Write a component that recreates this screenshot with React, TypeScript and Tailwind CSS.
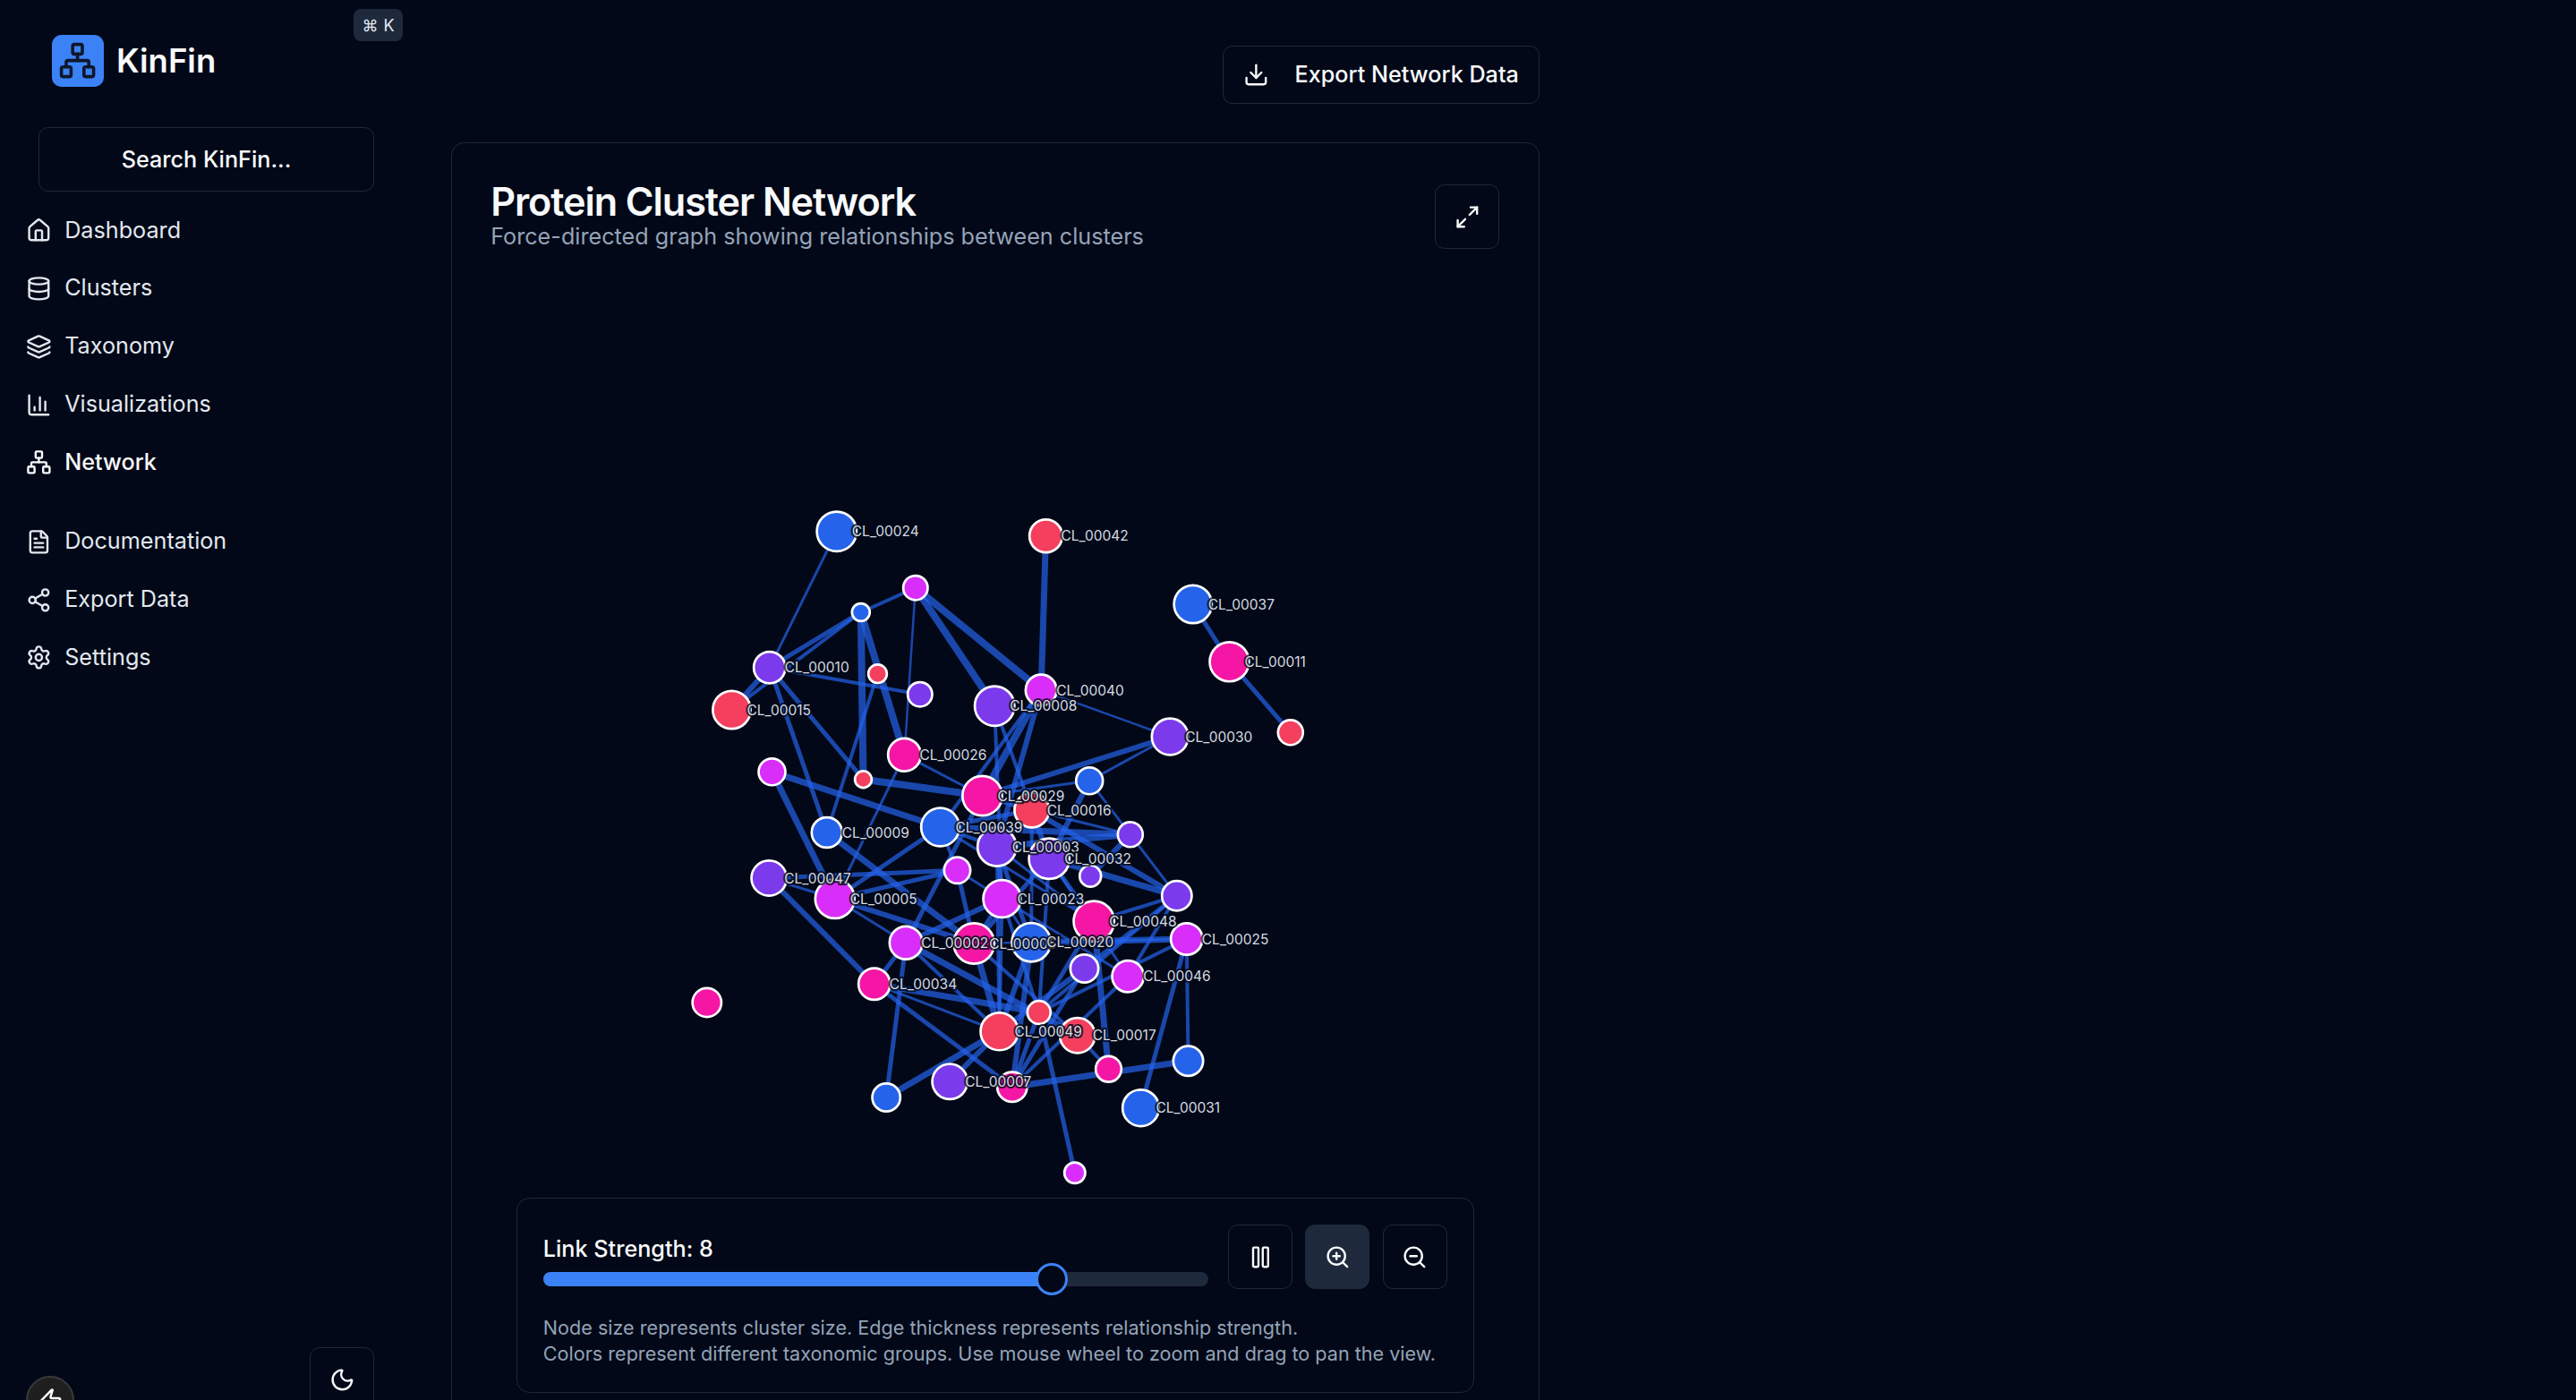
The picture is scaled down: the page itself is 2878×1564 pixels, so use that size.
import { Home, Database, Layers, ChartColumn, Network, FileText, Share2, Settings, Download, Maximize2, Pause, ZoomIn, ZoomOut, Moon, Zap } from "lucide-react";

const C = { b: "#2563eb", p: "#7c3aed", m: "#d92ef9", h: "#f516a6", r: "#f43f5e" };
type N = [string, number, number, number, string, string?];
const nodes: N[] = [
  ["n24", 934.3, 593.7, 23.5, C.b, "CL_00024"], ["n42", 1168, 598.7, 19.7, C.r, "CL_00042"],
  ["M1", 1022.3, 656.7, 15, C.m], ["B1", 961.3, 684, 11.3, C.b], ["n10", 859.3, 745.7, 19, C.p, "CL_00010"],
  ["R1", 980, 752.7, 11.7, C.r], ["P1", 1027.3, 775.7, 15, C.p], ["n08", 1110.7, 788.7, 23.5, C.p, "CL_00008"],
  ["n40", 1162.7, 771, 18.7, C.m, "CL_00040"], ["n15", 817, 793, 22.5, C.r, "CL_00015"],
  ["n26", 1010, 843.3, 19.7, C.h, "CL_00026"], ["M2", 862, 862.3, 16.3, C.m], ["R2", 964, 870.7, 10.7, C.r],
  ["n16", 1152.3, 905, 20.7, C.r, "CL_00016"], ["n29", 1097, 889, 23.5, C.h, "CL_00029"],
  ["n37", 1332.3, 675, 22.5, C.b, "CL_00037"], ["n11", 1373, 739.3, 23.3, C.h, "CL_00011"], ["R3", 1441.3, 818.3, 15.3, C.r],
  ["n30", 1306.7, 823, 21.7, C.p, "CL_00030"], ["B2", 1216.7, 872.3, 16.3, C.b], ["P2", 1262.3, 932.3, 15.3, C.p],
  ["n09", 923.3, 930, 18.3, C.b, "CL_00009"], ["n39", 1050, 924, 22.7, C.b, "CL_00039"], ["n03", 1113.3, 946, 23, C.p, "CL_00003"],
  ["n32", 1171.7, 959.3, 24, C.p, "CL_00032"], ["P3", 1217.7, 978.7, 13.3, C.p], ["M3", 1069, 972.3, 16, C.m],
  ["n23", 1119, 1004, 22.3, C.m, "CL_00023"], ["n48", 1221.7, 1029.3, 24, C.h, "CL_00048"], ["P4", 1314.3, 1000.7, 18, C.p],
  ["n25", 1325.3, 1049, 19, C.m, "CL_00025"], ["n02", 1011.7, 1053.3, 19.7, C.m, "CL_00002"], ["n00", 1087.7, 1054, 24, C.h, "CL_00006"],
  ["n20", 1151.7, 1052.7, 23, C.b, "CL_00020"], ["P5", 1211, 1082, 17, C.p], ["n46", 1259.7, 1090.7, 19, C.m, "CL_00046"],
  ["n34", 976.3, 1099.3, 19, C.h, "CL_00034"], ["n47", 858.7, 981, 21, C.p, "CL_00047"], ["n05", 932.3, 1004, 23.3, C.m, "CL_00005"],
  ["H1", 789.3, 1120, 17.5, C.h], ["n49", 1116, 1152.3, 22.3, C.r, "CL_00049"], ["R4", 1160.3, 1131, 14.3, C.r],
  ["n17", 1203.3, 1156.7, 21, C.r, "CL_00017"], ["H2", 1238, 1194.3, 15.7, C.h], ["n07", 1060.7, 1208.3, 21, C.p, "CL_00007"],
  ["H3", 1130.3, 1214.3, 18, C.h], ["B3", 989.7, 1226, 17, C.b], ["n31", 1274, 1237.7, 21.7, C.b, "CL_00031"],
  ["B4", 1327, 1185.3, 18, C.b], ["M4", 1200.3, 1310.3, 13, C.m],
];
const links: [string, string, number][] = [
  ["n24","n10",3],["M1","B1",4],["M1","n08",8],["M1","n40",8],["M1","n26",2.5],["B1","n10",5],["B1","n15",4],["B1","R2",8],["B1","n26",8],
  ["R1","n09",4],["n10","P1",4],["n10","R2",5],["n10","n09",5],["n10","n15",6],["n42","n40",7],["n40","n30",2.5],["n26","n29",3],["n26","n05",3],
  ["M2","n39",7],["M2","n05",7],["R2","n29",8],["n40","n39",4],["n40","n29",8],["n40","n03",6],["n08","n16",4],["n29","n30",6],["B2","n30",3],
  ["n29","B2",3],["B2","n32",6],["B2","P2",3],["P2","P4",3],["n16","P2",3],["n39","P2",7],["n03","P2",7],["P2","P3",6],["n37","n11",5],["n11","R3",5],
  ["n16","P4",6],["n32","P4",7],["n20","n25",7],["n48","P4",4],["P4","P5",5],["P4","n46",4],["n25","n31",5],["n25","B4",4],["H3","B4",7],["R4","M4",5],
  ["n17","H2",4],["n48","H2",7],["n46","H3",4],["n34","R4",7],["n34","n49",3],["n34","H3",5],["n34","n02",5],["n02","B3",5],["n34","n47",6],["n47","n05",3],
  ["n05","n02",3],["n05","n00",6],["n05","M3",5],["n05","n39",5],["n47","M3",5],["n09","n00",7],["n29","n02",5],["M3","n00",5],["M3","n23",3],["n02","n23",6],
  ["n02","n49",4],["n02","n17",7],["n00","n17",4],["n00","n49",7],["n23","n49",4],["n20","n49",6],["n20","H3",6],["n49","n07",6],["n49","B3",7],["R4","H3",5],
  ["P5","n49",6],["P5","H3",5],["n48","R4",5],["P4","R4",4],["n32","R4",4],["n23","n46",3],["n03","n20",5],["n32","n46",3],["n23","n20",3],["n29","n16",5],
  ["n16","n32",6],["n39","n03",4],["n39","M3",4],["n03","n49",4],["n39","n48",3],["n08","n23",4],["n03","n23",5],["n32","n00",5],["n16","n20",4],["n23","n00",5],
  ["n32","n48",5],["n39","n16",5],["n25","R4",4],["n03","n48",3],["n00","n25",2.5],["n23","R4",4],
];
const byId = Object.fromEntries(nodes.map((n) => [n[0], n]));
const labelled = nodes.filter((n) => n[5]).sort((a, b) => (a[5]! < b[5]! ? -1 : 1));

const navA = [
  { I: Home, t: "Dashboard" }, { I: Database, t: "Clusters" }, { I: Layers, t: "Taxonomy" }, { I: ChartColumn, t: "Visualizations" }, { I: Network, t: "Network", on: true },
];
const navB = [{ I: FileText, t: "Documentation" }, { I: Share2, t: "Export Data" }, { I: Settings, t: "Settings" }];

function Row({ I, t, on }: { I: typeof Home; t: string; on?: boolean }) {
  return (
    <div className={`flex h-[64.8px] items-center gap-[14.4px] text-[25.2px] ${on ? "font-medium text-[#f8fafc]" : "text-[#e2e8f0]"}`}>
      <I className="size-[28.8px] shrink-0" />
      <span>{t}</span>
    </div>
  );
}

function IconBtn({ children, active }: { children: React.ReactNode; active?: boolean }) {
  return (
    <div className={`flex size-[72px] items-center justify-center rounded-[10.8px] border-[1.8px] border-[#1e293b] text-[#f8fafc] ${active ? "bg-[#1e293b]" : ""}`}>
      {children}
    </div>
  );
}

export default function App() {
  return (
    <div className="flex h-[1564px] w-[2878px] overflow-hidden bg-[#020817] font-['Inter',sans-serif] text-[#f8fafc]">
      <aside className="relative flex h-[1564px] w-[461px] shrink-0 flex-col">
        <div className="absolute left-[395px] top-[10px] flex h-[36px] w-[55px] items-center justify-center gap-[6px] rounded-[8px] bg-[#1e293b] text-[18px] text-[#e2e8f0]">
          <span>⌘</span><span>K</span>
        </div>
        <div className="ml-[58px] mt-[39px] flex h-[58px] items-center gap-[14.4px]">
          <div className="flex size-[57.6px] items-center justify-center rounded-[10.8px] bg-[#3b82f6]">
            <Network className="size-[43.2px] text-[#0f172a]" />
          </div>
          <span className="text-[36.5px] font-semibold">KinFin</span>
        </div>
        <div className="ml-[43px] mt-[45px] flex h-[72px] w-[375px] items-center justify-center rounded-[10.8px] border-[1.8px] border-[#1e293b] pt-[1.5px] text-[25.2px] font-medium">
          Search KinFin...
        </div>
        <nav className="ml-[29px] mt-[11.2px]">
          {navA.map((n) => <Row key={n.t} {...n} />)}
          <div className="mt-[23.6px]">
            {navB.map((n) => <Row key={n.t} {...n} />)}
          </div>
        </nav>
        <div className="mb-[-13px] ml-[346px] mt-auto flex size-[72px] items-center justify-center rounded-[10.8px] border-[1.8px] border-[#1e293b]">
          <Moon className="size-[28.8px]" />
        </div>
        <div className="absolute left-[29px] top-[1537px] flex size-[54px] items-center justify-center rounded-full border-2 border-[#3a3a3a] bg-[#1f1f1f]">
          <Zap className="size-[28.8px] text-white" />
        </div>
      </aside>

      <main className="w-[1258.5px] shrink-0 pl-[43px] pt-[51px]">
        <div className="flex justify-end">
          <div className="flex h-[64.8px] items-center gap-[28.8px] rounded-[10.8px] border-[1.8px] border-[#1e293b] px-[21.6px] text-[25.2px] font-medium">
            <Download className="size-[28.8px]" />
            <span>Export Network Data</span>
          </div>
        </div>
        <div className="mt-[43.2px] h-[1500px] rounded-[14.4px] border-[1.8px] border-[#1e293b] px-[43.2px] pt-[44px]">
          <div className="flex items-start justify-between">
            <div>
              <div className="text-[43.2px] font-semibold leading-[43.2px] tracking-[-0.025em]">Protein Cluster Network</div>
              <div className="text-[25.2px] leading-[35px] text-[#94a3b8]">Force-directed graph showing relationships between clusters</div>
            </div>
            <div className="mt-[2px]">
              <IconBtn><Maximize2 className="size-[28.8px]" /></IconBtn>
            </div>
          </div>
          <svg className="block" width="1125.5" height="1056" viewBox="547.5 282 1125.5 1056">
            {links.map(([a, b, w], i) => (
              <line key={i} x1={byId[a][1]} y1={byId[a][2]} x2={byId[b][1]} y2={byId[b][2]} stroke="#2563eb" strokeOpacity={0.7} strokeWidth={w} />
            ))}
            {nodes.map((n) => (
              <circle key={n[0]} cx={n[1]} cy={n[2]} r={n[3] - 1.35} fill={n[4]} stroke="#ffffff" strokeWidth={2.7} />
            ))}
            {labelled.map((n) => (
              <text key={n[0]} x={n[1] + 17} y={n[2] + 5.6} fontSize={15.5} fill="#d5dae2" stroke="#020817" strokeOpacity={0.8} strokeWidth={4} className="[paint-order:stroke]">
                {n[5]}
              </text>
            ))}
          </svg>
          <div className="mx-[28.8px] rounded-[14.4px] border-[1.8px] border-[#1e293b] p-[28.8px]">
            <div className="flex gap-[21.6px]">
              <div className="flex-1 pt-[10px]">
                <div className="text-[25.2px] font-medium leading-[35px]">Link Strength: 8</div>
                <div className="relative mt-[8px] h-[16px] rounded-full bg-[#1e293b]">
                  <div className="h-full w-[567px] rounded-full bg-[#3b82f6]" />
                  <div className="absolute left-[550px] top-[-10px] size-[36px] rounded-full border-[3.6px] border-[#3b82f6] bg-[#020817]" />
                </div>
              </div>
              <div className="flex gap-[14.4px]">
                <IconBtn><Pause className="size-[28.8px]" /></IconBtn>
                <IconBtn active><ZoomIn className="size-[28.8px]" /></IconBtn>
                <IconBtn><ZoomOut className="size-[28.8px]" /></IconBtn>
              </div>
            </div>
            <div className="mt-[28.8px] text-[21.6px] leading-[28.8px] text-[#94a3b8]">
              <div>Node size represents cluster size. Edge thickness represents relationship strength.</div>
              <div>Colors represent different taxonomic groups. Use mouse wheel to zoom and drag to pan the view.</div>
            </div>
          </div>
        </div>
      </main>
    </div>
  );
}
